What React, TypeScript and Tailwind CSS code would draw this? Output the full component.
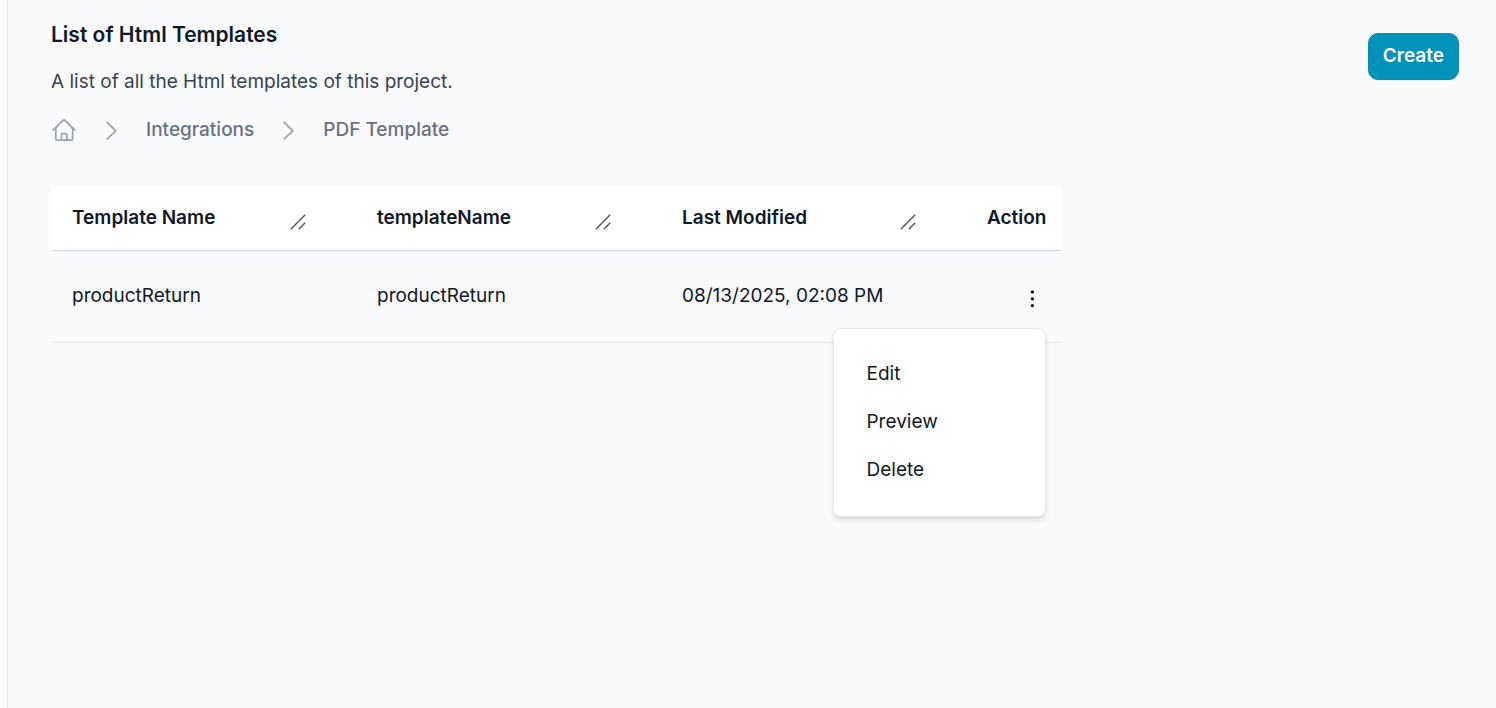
import { useState } from "react";

const columns = ["Template Name", "templateName", "Last Modified"];
const rows = [["productReturn", "productReturn", "08/13/2025, 02:08 PM"]];
const actions = ["Edit", "Preview", "Delete"];

function HomeIcon() {
  return (
    <svg className="size-[26px]" viewBox="0 0 26 26" fill="none" stroke="currentColor" strokeWidth="1.7" strokeLinecap="round" strokeLinejoin="round" aria-hidden="true">
      <path d="M2.2 13.2 12.3 3.2a1 1 0 0 1 1.4 0l10.1 10" />
      <path d="M4.8 10.7v11.2a1.2 1.2 0 0 0 1.2 1.2h14.4a1.2 1.2 0 0 0 1.2-1.2V10.7" />
      <path d="M10.5 23.1v-5.2a1.2 1.2 0 0 1 1.2-1.2h3a1.2 1.2 0 0 1 1.2 1.2v5.2" />
    </svg>
  );
}

function ChevronIcon() {
  return (
    <svg className="h-5 w-3" viewBox="0 0 12 20" fill="none" stroke="currentColor" strokeWidth="1.7" strokeLinecap="round" strokeLinejoin="round" aria-hidden="true">
      <path d="M2.2 2.4 10.8 10.8 2.2 19" />
    </svg>
  );
}

function ResizeGrip() {
  return (
    <svg className="mt-2 size-4 cursor-col-resize text-[#5a5a5a]" viewBox="0 0 16 16" fill="none" stroke="currentColor" strokeWidth="1.5" aria-hidden="true">
      <path d="M.8 15.2 15.2.8M8.8 15.2l6.4-6.4" />
    </svg>
  );
}

export default function App() {
  const [open, setOpen] = useState(true);

  return (
    <div className="min-h-screen bg-[#f9fafc] pl-[7px] font-['Inter',sans-serif] text-[19px] leading-7 text-gray-900">
      <main className="min-h-screen border-l border-gray-200 pl-[43px] pr-[37px] pt-[21px]">
        <header className="flex items-start justify-between">
          <div>
            <h1 className="text-[21px] font-semibold leading-7">List of Html Templates</h1>
            <p className="mt-[19px] text-gray-700">A list of all the Html templates of this project.</p>
            <nav aria-label="Breadcrumb" className="mt-5">
              <ol className="flex items-center font-medium text-gray-500">
                <li>
                  <a href="#home" aria-label="Home" className="block text-gray-400"><HomeIcon /></a>
                </li>
                <li className="ml-7 flex items-center gap-[29px]">
                  <span className="text-gray-400"><ChevronIcon /></span>
                  <a href="#integrations">Integrations</a>
                </li>
                <li className="ml-7 flex items-center gap-[29px]">
                  <span className="text-gray-400"><ChevronIcon /></span>
                  <a href="#pdf-template" aria-current="page">PDF Template</a>
                </li>
              </ol>
            </nav>
          </div>
          <button type="button" className="mt-3 h-[47px] rounded-[10px] border border-[#0e87a8] bg-[#0092b8] px-[14px] pb-0.5 font-semibold text-white shadow-xs">
            Create
          </button>
        </header>

        <table className="mt-[42px] border-collapse text-left">
          <thead>
            <tr className="h-16 border-b border-gray-300 bg-white">
              {columns.map((name) => (
                <th key={name} scope="col" className="w-[305px] pl-[21px] font-semibold">
                  <div className="flex items-center justify-between pr-[50px]">
                    {name}
                    <ResizeGrip />
                  </div>
                </th>
              ))}
              <th scope="col" className="pl-[21px] pr-4 font-semibold">Action</th>
            </tr>
          </thead>
          <tbody>
            {rows.map((row) => (
              <tr key={row[0]} className="h-[92px] border-b border-gray-200">
                {row.map((value, i) => (
                  <td key={columns[i]} className="pl-[21px]">{value}</td>
                ))}
                <td className="pr-4">
                  <div className="relative flex justify-end">
                    <button type="button" aria-label="Row actions" aria-expanded={open} onClick={() => setOpen(!open)} className="flex h-8 w-7 items-center justify-center text-black">
                      <svg className="h-6 w-1" viewBox="0 0 4 24" fill="currentColor" aria-hidden="true">
                        <circle cx="2.4" cy="8" r="1.6" />
                        <circle cx="2.4" cy="14.8" r="1.6" />
                        <circle cx="2.4" cy="21.6" r="1.6" />
                      </svg>
                    </button>
                    {open && (
                      <div role="menu" className="absolute right-0 top-full mt-4 flex w-[213px] flex-col rounded-lg border border-gray-200 bg-white py-[21px] pb-[22px] shadow-md">
                        {actions.map((label) => (
                          <button key={label} type="button" role="menuitem" className="h-12 px-8 text-left">{label}</button>
                        ))}
                      </div>
                    )}
                  </div>
                </td>
              </tr>
            ))}
          </tbody>
        </table>
      </main>
    </div>
  );
}
